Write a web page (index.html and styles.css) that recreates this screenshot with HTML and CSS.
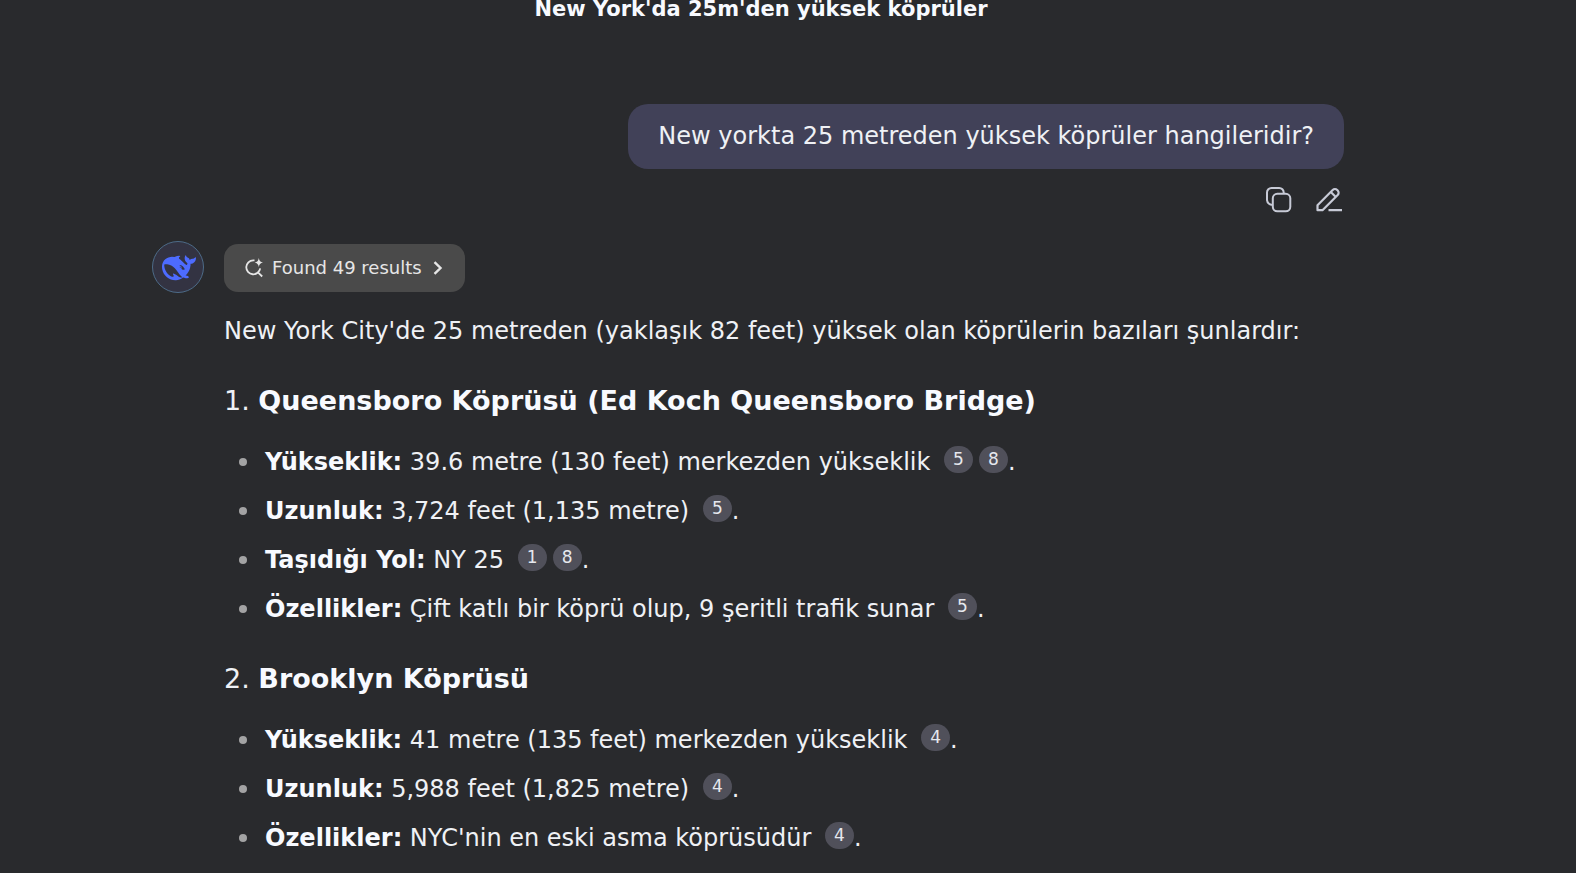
FILE: index.html
```html
<!DOCTYPE html>
<html lang="tr">
<head>
<meta charset="utf-8">
<meta name="viewport" content="width=device-width, initial-scale=1">
<title>New York'da 25m'den yüksek köprüler</title>
<link rel="stylesheet" href="styles.css">
</head>
<body>
<header class="topbar"><h1 class="title">New York'da 25m'den yüksek köprüler</h1></header>
<main class="chat">
  <section class="question">
    <p class="bubble">New yorkta 25 metreden yüksek köprüler hangileridir?</p>
    <div class="actions">
      <button class="icon-button" type="button" aria-label="Kopyala">
        <svg width="28" height="28" viewBox="0 0 28 28" fill="none" stroke="currentColor" stroke-width="2"><rect x="7.800" y="7.800" width="17.500" height="17.500" rx="4.500"/><path d="M8 18.700A5 5 0 0 1 2 14.200V6.500A4.500 4.500 0 0 1 6.500 2h7.700a4.500 4.500 0 0 1 4.500 4.500V8"/></svg>
      </button>
      <button class="icon-button" type="button" aria-label="Düzenle">
        <svg width="28" height="28" viewBox="0 0 28 28" fill="none" stroke="currentColor" stroke-width="2.200" stroke-linejoin="round"><path d="M1.500 24.200v-5L16.700 4a3.200 3.200 0 0 1 4.500 0l.5.500a3.200 3.200 0 0 1 0 4.500L6.500 24.200zM14.800 6l5 5M12.500 24.200H26"/></svg>
      </button>
    </div>
  </section>
  <article class="answer">
    <div class="avatar">
      <svg width="34" height="34" viewBox="0 0 24 24" fill="currentColor" aria-hidden="true"><path d="M23.748 4.482c-.254-.124-.364.113-.512.234-.051.039-.094.09-.137.136-.372.397-.806.657-1.373.626-.829-.046-1.537.214-2.163.848-.133-.782-.575-1.248-1.247-1.548-.352-.156-.708-.311-.955-.65-.172-.241-.219-.51-.305-.774-.055-.16-.11-.323-.293-.35-.2-.031-.278.136-.356.276-.313.572-.434 1.202-.422 1.84.027 1.436.633 2.58 1.838 3.393.137.093.172.187.129.323-.082.28-.18.552-.266.833-.055.179-.137.217-.329.14a5.526 5.526 0 0 1-1.736-1.18c-.857-.828-1.631-1.742-2.597-2.458a11.365 11.365 0 0 0-.689-.471c-.985-.957.13-1.743.388-1.836.27-.098.093-.432-.779-.428-.872.004-1.67.295-2.687.684a3.055 3.055 0 0 1-.465.137 9.597 9.597 0 0 0-2.883-.102c-1.885.21-3.39 1.102-4.497 2.623C.082 8.606-.231 10.684.152 12.85c.403 2.284 1.569 4.175 3.36 5.653 1.858 1.533 3.997 2.284 6.438 2.14 1.482-.085 3.133-.284 4.994-1.86.47.234.962.327 1.78.397.63.059 1.236-.03 1.705-.128.735-.156.684-.837.419-.961-2.155-1.004-1.682-.595-2.113-.926 1.096-1.296 2.746-2.642 3.392-7.003.05-.347.007-.565 0-.845-.004-.17.035-.237.23-.256a4.173 4.173 0 0 0 1.545-.475c1.396-.763 1.96-2.015 2.093-3.517.02-.23-.004-.467-.247-.588zM11.581 18c-2.089-1.642-3.102-2.183-3.52-2.16-.392.024-.321.471-.235.763.09.288.207.486.371.739.114.167.192.416-.113.603-.673.416-1.842-.14-1.897-.167-1.361-.802-2.5-1.86-3.301-3.307-.774-1.393-1.224-2.887-1.298-4.482-.02-.386.093-.522.477-.592a4.696 4.696 0 0 1 1.529-.039c2.132.312 3.946 1.265 5.468 2.774.868.86 1.525 1.887 2.202 2.891.72 1.066 1.494 2.082 2.48 2.914.348.292.625.514.891.677-.802.09-2.14.11-3.054-.614zm1-6.440a.306.306 0 0 1 .415-.287.302.302 0 0 1 .2.288.306.306 0 0 1-.31.307.303.303 0 0 1-.304-.308zm3.110 1.596c-.2.081-.399.151-.59.160a1.245 1.245 0 0 1-.798-.254c-.274-.230-.470-.358-.552-.758a1.730 1.730 0 0 1 .016-.588c.070-.327-.008-.537-.239-.727-.187-.156-.426-.199-.688-.199a.559.559 0 0 1-.254-.078c-.110-.054-.200-.190-.114-.358.028-.054.160-.186.192-.210.356-.202.767-.136 1.146.016.352.144.618.408 1.001.782.391.451.462.576.685.914.176.265.336.537.445.848.067.195-.019.354-.250.452z"/></svg>
    </div>
    <div class="content">
      <button class="results" type="button">
        <svg width="20" height="20" viewBox="0 0 20 20" fill="none" stroke="currentColor" stroke-width="1.800"><path d="M10.500 2.300H9.200a7 7 0 1 0 7 8M14.200 14.600l4 3.900"/><path d="M14.800 0q.5 4 4.200 4.500-3.700.5-4.200 4.500-.5-4-4.200-4.500 3.700-.5 4.200-4.500z" fill="currentColor" stroke="none"/></svg>
        <span>Found 49 results</span>
        <svg class="chevron" width="10" height="14" viewBox="0 0 10 14" fill="none" stroke="currentColor" stroke-width="2.400"><path d="M1.500 1.200L7.500 7l-6 5.800"/></svg>
      </button>
      <p class="intro">New York City'de 25 metreden (yaklaşık 82 feet) yüksek olan köprülerin bazıları şunlardır:</p>
      <h2 class="bridge">1. <strong>Queensboro Köprüsü (Ed Koch Queensboro Bridge)</strong></h2>
      <ul class="facts">
        <li><strong>Yükseklik:</strong> 39.6 metre (130 feet) merkezden yükseklik <a class="cite" href="#">5</a><a class="cite" href="#">8</a>.</li>
        <li><strong>Uzunluk:</strong> 3,724 feet (1,135 metre) <a class="cite" href="#">5</a>.</li>
        <li><strong>Taşıdığı Yol:</strong> NY 25 <a class="cite" href="#">1</a><a class="cite" href="#">8</a>.</li>
        <li><strong>Özellikler:</strong> Çift katlı bir köprü olup, 9 şeritli trafik sunar <a class="cite" href="#">5</a>.</li>
      </ul>
      <h2 class="bridge">2. <strong>Brooklyn Köprüsü</strong></h2>
      <ul class="facts">
        <li><strong>Yükseklik:</strong> 41 metre (135 feet) merkezden yükseklik <a class="cite" href="#">4</a>.</li>
        <li><strong>Uzunluk:</strong> 5,988 feet (1,825 metre) <a class="cite" href="#">4</a>.</li>
        <li><strong>Özellikler:</strong> NYC'nin en eski asma köprüsüdür <a class="cite" href="#">4</a>.</li>
      </ul>
    </div>
  </article>
</main>
</body>
</html>
```
FILE: styles.css
```css
* { box-sizing: border-box; }
body {
  margin: 0;
  background: #292a2d;
  color: #eff1f5;
  font-family: "DejaVu Sans", sans-serif;
  font-size: 24px;
  line-height: 40px;
}
button { border: 0; font: inherit; cursor: pointer; }
p, h1, h2, ul { margin: 0; padding: 0; }
svg { display: block; }
strong { color: #f8faff; }

.topbar { height: 104px; padding-right: 54px; text-align: center; }
.title { font-size: 21px; line-height: 18px; font-weight: 700; color: #f8faff; }

.chat { max-width: 1272px; margin: 0 auto; padding-right: 80px; }
.question { display: flex; flex-direction: column; align-items: flex-end; }
.bubble { padding: 12px 30px 13px; border-radius: 20px; background: #414158; }
.actions { display: flex; gap: 23px; margin-top: 17px; }
.icon-button { padding: 0; background: none; color: #c7cad6; }

.answer { display: flex; gap: 20px; margin-top: 27px; }
.avatar {
  display: flex;
  flex: none;
  align-items: center;
  justify-content: center;
  width: 52px;
  height: 52px;
  padding: 2px 0 0 2px;
  border: 1px solid #4d6b88;
  border-radius: 50%;
  background: #333342;
  color: #4d6bfe;
}
.content { flex: 1; min-width: 0; padding-top: 3px; }
.results {
  display: flex;
  align-items: center;
  gap: 8px;
  height: 48px;
  padding: 0 22px 0 20px;
  border-radius: 14px;
  background: #4a4a4a;
  color: #e6e6e6;
  font-size: 18px;
}
.chevron { margin-left: 3px; }
.intro { margin-top: 19px; }
.bridge { margin-top: 30px; font-size: 27px; font-weight: 400; }
.facts { margin-top: 21px; list-style: none; }
.facts li { display: flow-root; position: relative; padding-left: 41px; }
.facts li + li { margin-top: 9px; }
.facts li::before {
  content: "";
  position: absolute;
  left: 15px;
  top: 16px;
  width: 8px;
  height: 8px;
  border-radius: 50%;
  background: #a3a3a4;
}
.cite {
  display: inline-block;
  min-width: 29px;
  height: 27px;
  margin: 0 0 0 6px;
  border-radius: 14px;
  background: #50505a;
  color: #e6e8ee;
  font-size: 17px;
  line-height: 27px;
  text-align: center;
  text-decoration: none;
  vertical-align: 5px;
}
```
